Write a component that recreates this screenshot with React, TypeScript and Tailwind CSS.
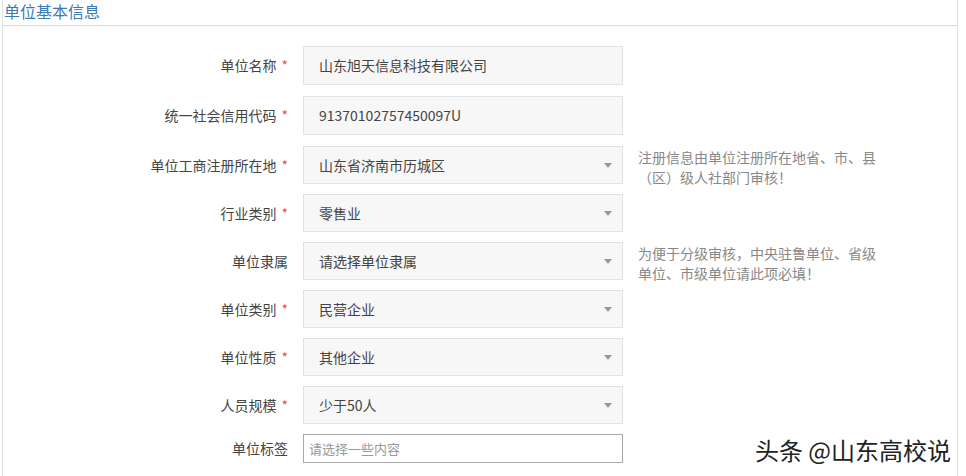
import React from 'react';

type Field = {
  label: string;
  required: boolean;
  value: string;
  select: boolean;
  hint?: string[];
  h: string;
};

const fields: Field[] = [
  { label: '单位名称', required: true, value: '山东旭天信息科技有限公司', select: false, h: 'h-[39px] mb-[11px]' },
  { label: '统一社会信用代码', required: true, value: '91370102757450097U', select: false, h: 'h-[39px] mb-[11px]' },
  {
    label: '单位工商注册所在地',
    required: true,
    value: '山东省济南市历城区',
    select: true,
    hint: ['注册信息由单位注册所在地省、市、县', '（区）级人社部门审核！'],
    h: 'h-[38px] mb-[10px]',
  },
  { label: '行业类别', required: true, value: '零售业', select: true, h: 'h-[38px] mb-[10px]' },
  {
    label: '单位隶属',
    required: false,
    value: '请选择单位隶属',
    select: true,
    hint: ['为便于分级审核，中央驻鲁单位、省级', '单位、市级单位请此项必填！'],
    h: 'h-[38px] mb-[10px]',
  },
  { label: '单位类别', required: true, value: '民营企业', select: true, h: 'h-[38px] mb-[10px]' },
  { label: '单位性质', required: true, value: '其他企业', select: true, h: 'h-[38px] mb-[10px]' },
  { label: '人员规模', required: true, value: '少于50人', select: true, h: 'h-[38px] mb-[10px]' },
];

function Caret() {
  return (
    <svg width="8" height="5" viewBox="0 0 8 5" className="shrink-0">
      <path d="M0 0 L8 0 L4 5 Z" fill="#9a9a9a" />
    </svg>
  );
}

function Row({ f }: { f: Field }) {
  return (
    <div className={`flex items-start ${f.h}`}>
      <div className="w-[285px] h-full flex items-center justify-end text-[14px] text-[#444]">
        <span>{f.label}</span>
        {f.required && <span className="ml-[5px] text-[#e05555]">*</span>}
      </div>
      <div className="ml-[15px] w-[320px] h-full flex items-center justify-between bg-[#f7f7f7] border border-[#e2e2e2] pl-[15px] pr-[10px] text-[14px] text-[#444]">
        <span>{f.value}</span>
        {f.select && <Caret />}
      </div>
      {f.hint && (
        <div className="ml-[15px] pt-[1px] text-[14px] leading-[20px] text-[#888]">
          {f.hint[0]}
          <br />
          {f.hint[1]}
        </div>
      )}
    </div>
  );
}

export default function App() {
  return (
    <div
      className="relative w-[966px] h-[476px] bg-white overflow-hidden pl-[2px]"
      style={{ fontFamily: '"Noto Sans CJK SC", "Noto Sans", sans-serif' }}
    >
      <div className="w-[956px] h-full border-l border-r border-[#dde3e0]">
        <div className="h-[26px] border-b border-[#dcdcdc] pl-[1px] text-[16px] leading-[22px] text-[#3d79b5]">
          单位基本信息
        </div>
        <div className="pt-[20px]">
          {fields.map(f => (
            <Row key={f.label} f={f} />
          ))}
          <div className="flex items-start h-[29px]">
            <div className="w-[285px] h-full flex items-center justify-end text-[14px] text-[#444]">
              <span>单位标签</span>
            </div>
            <div className="ml-[15px] w-[320px] h-full flex items-center bg-white border border-[#a9a9a9] pl-[5px] text-[13px] text-[#999]">
              请选择一些内容
            </div>
          </div>
        </div>
      </div>
      <div className="absolute right-[15px] top-[432px] text-[24px] text-[#222] [text-shadow:1px_1px_0_#fff,-1px_-1px_0_#fff,1px_-1px_0_#fff,-1px_1px_0_#fff]">
        头条 @山东高校说
      </div>
    </div>
  );
}
